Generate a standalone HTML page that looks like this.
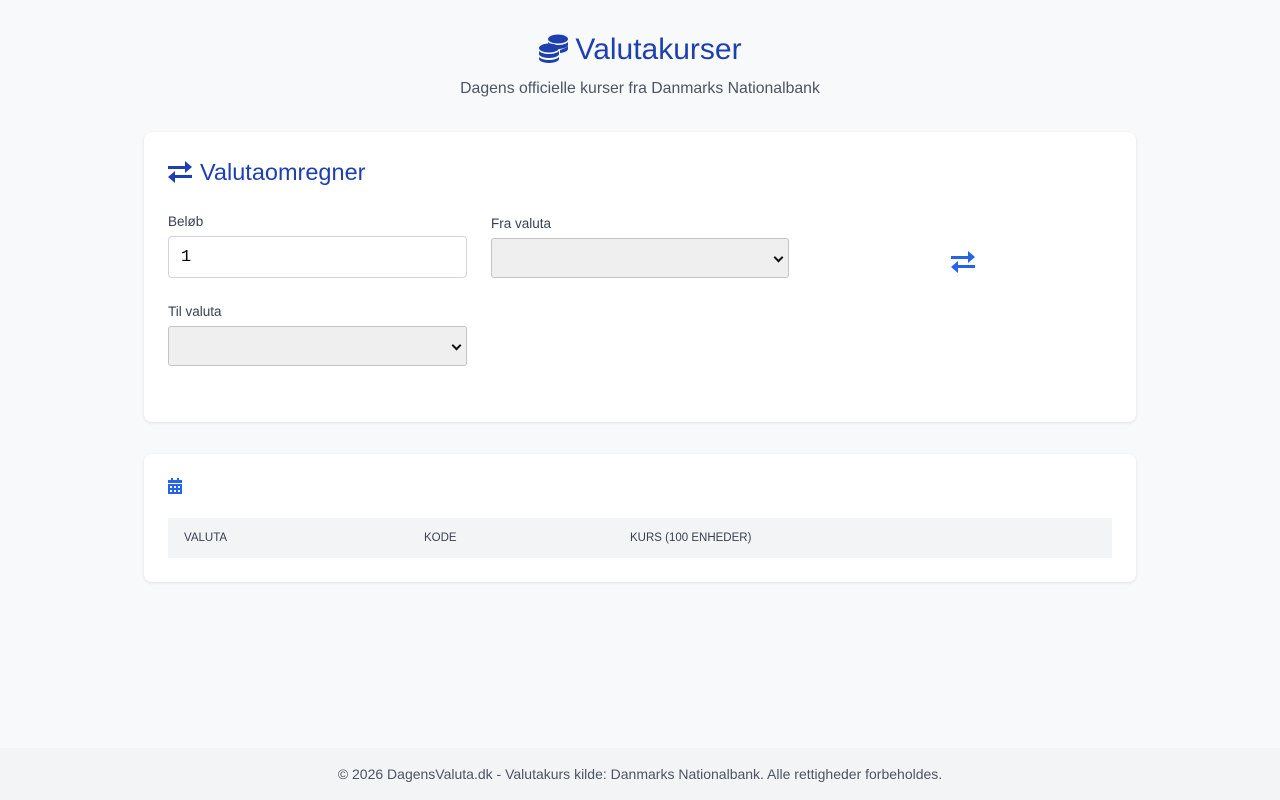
<!DOCTYPE html>
<html><head><meta charset="utf-8"><style>
*{box-sizing:border-box;margin:0;padding:0}
body{width:1280px;height:800px;background:#f8f9fb;font-family:"Liberation Sans",sans-serif;position:relative;overflow:hidden}
h1{position:absolute;top:30px;left:0;width:1280px;text-align:center;color:#1e40af;font-size:30px;font-weight:normal;line-height:40px}
h1 svg{vertical-align:-4px;margin-right:6px}
.sub{position:absolute;top:80px;width:1280px;text-align:center;color:#4b5563;font-size:15.8px}
.card{position:absolute;left:144px;width:992px;background:#fff;border-radius:8px;box-shadow:0 1px 3px rgba(0,0,0,.1)}
.h2{position:absolute;left:24px;top:26px;color:#1e40af;font-size:23.5px;line-height:28px}
.h2 svg{vertical-align:-3px;margin-right:8px}
label{position:absolute;font-size:13.5px;color:#374151}
.inp{position:absolute;border:1px solid #d1d5db;border-radius:4px;background:#fff;font-size:17px;padding:11px 12px 7px;font-family:"Liberation Mono",monospace}
.sel{position:absolute;border:1px solid #c4c4c4;border-radius:3px;background:#efefef;height:40px}
.sel:after{content:"";position:absolute;right:6px;top:15px;width:5px;height:5px;border-right:2px solid #111;border-bottom:2px solid #111;transform:rotate(45deg)}
.th{position:absolute;left:24px;top:64px;width:944px;height:40px;background:#f3f4f6;font-size:11.5px;color:#374151}
.th span{position:absolute;top:14px}
footer{position:absolute;top:748px;left:0;width:1280px;height:52px;background:#f3f4f6;text-align:center;font-size:14px;color:#4b5563;line-height:52px}
</style></head><body>
<h1><svg width="31" height="30" viewBox="0 0 31 30" fill="#1e40af"><ellipse cx="20" cy="6" rx="10" ry="4.5"/><path d="M10 9v3c0 2 4.5 4 10 4s10-2 10-4V9c-2 2-6 3-10 3s-8-1-10-3z"/><path d="M22 17v3c4-.3 8-2 8-4v-3c-2 2-5 3-8 4z"/><ellipse cx="11" cy="15" rx="10" ry="4.5"/><path d="M1 18v3c0 2 4.5 4 10 4s10-2 10-4v-3c-2 2-6 3-10 3S3 20 1 18z"/><path d="M1 24v2c0 2 4.5 4 10 4s10-2 10-4v-2c-2 2-6 3-10 3S3 26 1 24z"/></svg>Valutakurser</h1>
<div class="sub">Dagens officielle kurser fra Danmarks Nationalbank</div>
<div class="card" style="top:132px;height:290px">
<div class="h2"><svg width="24" height="24" viewBox="0 0 24 24" fill="#1e40af"><path d="M0 7h17V2l7 6-7 6v-4H0z"/><path d="M24 16H7v-4l-7 6 7 6v-5h17z"/></svg>Valutaomregner</div>
<label style="left:24px;top:82px">Beløb</label>
<div class="inp" style="left:24px;top:104px;width:299px;height:42px">1</div>
<label style="left:347px;top:84px">Fra valuta</label>
<div class="sel" style="left:347px;top:106px;width:298px"></div>
<svg style="position:absolute;left:807px;top:117px" width="24" height="24" viewBox="0 0 24 24" fill="#2563eb"><path d="M0 7h17V2l7 6-7 6v-4H0z"/><path d="M24 16H7v-4l-7 6 7 6v-5h17z"/></svg>
<label style="left:24px;top:172px">Til valuta</label>
<div class="sel" style="left:24px;top:194px;width:299px"></div>
</div>
<div class="card" style="top:454px;height:128px">
<svg style="position:absolute;left:24px;top:24px" width="14" height="16" viewBox="0 0 14 16" fill="#2563eb"><rect x="3" y="0" width="2" height="3"/><rect x="9" y="0" width="2" height="3"/><path d="M0 2h14v3H0z"/><path d="M0 6h14v10H0z M2 8v2h2V8z M6 8v2h2V8z M10 8v2h2V8z M2 12v2h2v-2z M6 12v2h2v-2z M10 12v2h2v-2z" fill-rule="evenodd"/></svg>
<div class="th"><span style="left:16px">VALUTA</span><span style="left:256px">KODE</span><span style="left:462px">KURS (100 ENHEDER)</span></div>
</div>
<footer>© 2026 DagensValuta.dk - Valutakurs kilde: Danmarks Nationalbank. Alle rettigheder forbeholdes.</footer>
</body></html>
